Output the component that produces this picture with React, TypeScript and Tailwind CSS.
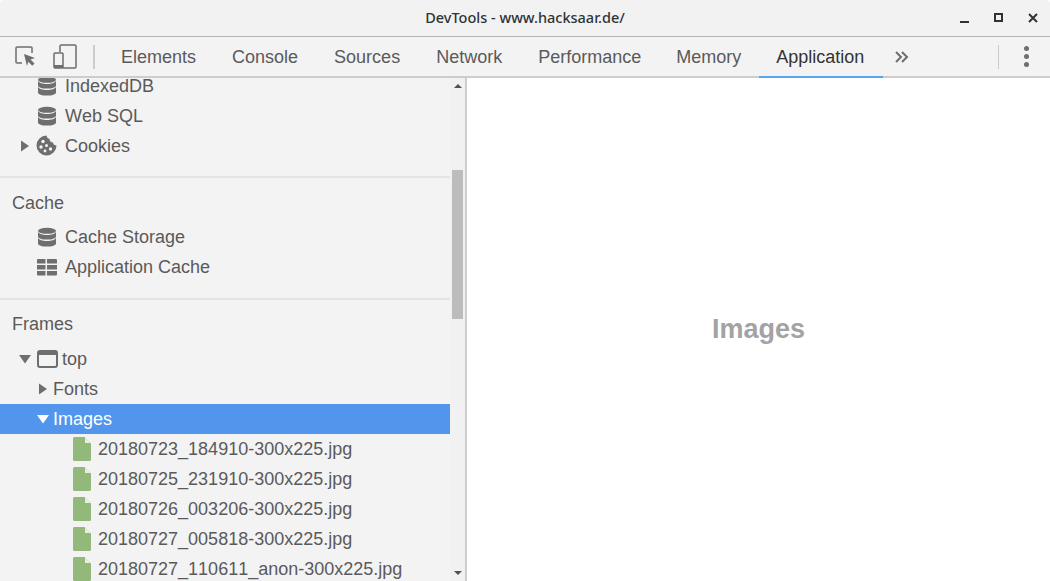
import React from "react";

const Db: React.FC = () => (
  <svg width="20" height="20" viewBox="0 0 20 20" className="shrink-0">
    <ellipse cx="10" cy="3.800" rx="9" ry="3" fill="#6e6e6e" />
    <path d="M1 4.700c1 2.100 4.500 3.200 9 3.200s8-1.100 9-3.200v4.800c0 2-4 3.100-9 3.100s-9-1.100-9-3.100z" fill="#6e6e6e" />
    <path d="M1 10.700c1 2.100 4.500 3.200 9 3.200s8-1.100 9-3.200v5.700c0 2-4 3.100-9 3.100s-9-1.100-9-3.100z" fill="#6e6e6e" />
  </svg>
);

const Cookie: React.FC = () => (
  <svg width="21" height="21" viewBox="0 0 21 21" className="shrink-0">
    <path d="M10.500.5a4 4 0 0 0 3 3.500 4 4 0 0 0 3.500 3.500 3.500 3.500 0 0 0 3.500 3A10 10 0 1 1 10.500.5z" fill="#6e6e6e" />
    <circle cx="7" cy="6.500" r="1.700" fill="#f3f3f3" />
    <circle cx="5" cy="12" r="1.700" fill="#f3f3f3" />
    <circle cx="10.500" cy="10.500" r="1.500" fill="#f3f3f3" />
    <circle cx="14.500" cy="14" r="1.700" fill="#f3f3f3" />
    <circle cx="9" cy="16" r="1.400" fill="#f3f3f3" />
  </svg>
);

const Grid: React.FC = () => (
  <svg width="20" height="17" viewBox="0 0 20 17" className="shrink-0">
    <path d="M0 1a1 1 0 0 1 1-1h7.500v4.500H0zM10 0h9a1 1 0 0 1 1 1v3.500H10zM0 6h8.500v4.500H0zM10 6h10v4.500H10zM0 12h8.500v4.500H1a1 1 0 0 1-1-1zM10 12h10v3.500a1 1 0 0 1-1 1h-9z" fill="#6e6e6e" />
  </svg>
);

const FileIcon: React.FC = () => (
  <svg width="18" height="24" viewBox="0 0 18 24" className="shrink-0">
    <path d="M1.500 0H11.500l6.500 6.500v16a1.500 1.500 0 0 1-1.500 1.500h-15A1.500 1.500 0 0 1 0 22.500v-21A1.500 1.500 0 0 1 1.500 0z" fill="#93b97a" />
    <path d="M12 .5l5.500 5.500h-5.500z" fill="#e8f0e2" />
  </svg>
);

const Arrow: React.FC<{ open?: boolean; white?: boolean }> = ({ open, white }) => (
  <svg width="12" height="12" viewBox="0 0 12 12" className="shrink-0">
    {open ? (
      <path d="M0 2h12L6 10.500z" fill={white ? "#ffffff" : "#6e6e6e"} />
    ) : (
      <path d="M2 .500l8 5.500-8 5.500z" fill="#6e6e6e" />
    )}
  </svg>
);

const Row: React.FC<{
  label: string;
  icon?: React.ReactNode;
  pad: string;
  gap?: string;
  selected?: boolean;
}> = ({ label, icon, pad, gap = "gap-2", selected }) => (
  <div
    className={
      selected
        ? `flex h-[30px] items-center bg-[#5196ec] text-white ${pad} ${gap}`
        : `flex h-[30px] items-center ${pad} ${gap}`
    }
  >
    {icon}
    <span className="whitespace-nowrap">{label}</span>
  </div>
);

const files = [
  "20180723_184910-300x225.jpg",
  "20180725_231910-300x225.jpg",
  "20180726_003206-300x225.jpg",
  "20180727_005818-300x225.jpg",
  "20180727_110611_anon-300x225.jpg",
];

const tabs = ["Elements", "Console", "Sources", "Network", "Performance", "Memory"];

const App: React.FC = () => {
  return (
    <div className="flex h-[581px] w-[1050px] flex-col overflow-hidden bg-white font-['Liberation_Sans',sans-serif] text-[18px] text-[#5a5a5a] [font-kerning:none]">
      {/* title bar */}
      <div className="relative flex h-[37px] shrink-0 items-center justify-center rounded-t-[4px] border-b border-[#b4b4ae] bg-[#f2f2f2]">
        <span className="font-['Noto_Sans',sans-serif] text-[14.500px] font-medium text-[#2e3436] [font-kerning:normal]">
          DevTools - www.hacksaar.de/
        </span>
        <div className="absolute right-[12px] top-[12px] flex items-center gap-[25px]">
          <div className="mt-[9px] h-[2px] w-[9px] bg-[#2e3436]" />
          <div className="h-[9px] w-[9px] border-2 border-[#2e3436]" />
          <svg width="10" height="10" viewBox="0 0 10 10">
            <path d="M1 1l8 8M9 1l-8 8" stroke="#2e3436" strokeWidth="2" />
          </svg>
        </div>
      </div>

      {/* toolbar */}
      <div className="flex h-[41px] shrink-0 items-center border-b-2 border-[#cdcdcd] bg-[#f3f3f3]">
        <div className="flex w-[94px] shrink-0 items-center pl-[15px]">
          <svg width="21" height="21" viewBox="0 0 21 21" className="shrink-0">
            <path d="M7 17H2a1 1 0 0 1-1-1V2a1 1 0 0 1 1-1h14a1 1 0 0 1 1 1v5" fill="none" stroke="#6e6e6e" strokeWidth="1.500" />
            <path d="M9 8l11 4-4.500 1.500 4 4-2.200 2.200-4-4L12 20z" fill="#6e6e6e" />
          </svg>
          <svg width="24" height="25" viewBox="0 0 24 25" className="ml-[17px] shrink-0">
            <path d="M7 8V2a1 1 0 0 1 1-1h14a1 1 0 0 1 1 1v21a1 1 0 0 1-1 1H10" fill="none" stroke="#6e6e6e" strokeWidth="1.500" />
            <rect x="1" y="9" width="9" height="15" rx="1" fill="none" stroke="#6e6e6e" strokeWidth="1.500" />
            <rect x="1" y="21" width="9" height="3" fill="#6e6e6e" />
          </svg>
          <div className="ml-[16px] h-[24px] w-[2px] shrink-0 bg-[#cccccc]" />
        </div>
        <div className="flex h-full items-center pl-[9px]">
          {tabs.map((tab) => (
            <div
              key={tab}
              className={
                tab === "Memory"
                  ? "-ml-px flex h-full items-center px-[18px] pt-[2px]"
                  : "flex h-full items-center px-[18px] pt-[2px]"
              }
            >
              {tab}
            </div>
          ))}
          <div className="relative -mb-[2px] flex h-[41px] w-[124px] items-center justify-center pr-[2px] text-[#333333]">
            Application
            <div className="absolute bottom-0 left-0 h-[2px] w-full bg-[#58a6f2]" />
          </div>
          <svg width="14" height="12" viewBox="0 0 14 12" className="ml-[12px]">
            <path d="M1 1l5 5-5 5M7 1l5 5-5 5" fill="none" stroke="#6e6e6e" strokeWidth="2" />
          </svg>
        </div>
        <div className="ml-auto flex items-center">
          <div className="h-[24px] w-px bg-[#cccccc]" />
          <div className="ml-[25px] mr-[21px] flex flex-col gap-[3px]">
            <div className="h-[5px] w-[5px] rounded-full bg-[#6e6e6e]" />
            <div className="h-[5px] w-[5px] rounded-full bg-[#6e6e6e]" />
            <div className="h-[5px] w-[5px] rounded-full bg-[#6e6e6e]" />
          </div>
        </div>
      </div>

      <div className="flex min-h-0 flex-1">
        {/* sidebar */}
        <div className="flex w-[467px] shrink-0 border-r-2 border-[#cdcdcd] bg-[#f3f3f3]">
          <div className="w-[450px] shrink-0 overflow-hidden">
            <div className="-mt-[7px]">
              <Row label="IndexedDB" pad="pl-[37px]" icon={<Db />} />
              <Row label="Web SQL" pad="pl-[37px]" icon={<Db />} />
              <Row
                label="Cookies"
                pad="pl-[19px]"
                gap="gap-[9px]"
                icon={
                  <>
                    <Arrow />
                    <span className="-ml-[4px] -mt-[2px] w-[20px]">
                      <Cookie />
                    </span>
                  </>
                }
              />
              <div className="mt-[15px] h-[2px] bg-[#e4e4e4]" />
              <div className="flex h-[44px] items-center pt-[6px] pl-[12px]">Cache</div>
              <Row label="Cache Storage" pad="pl-[37px]" icon={<Db />} />
              <Row label="Application Cache" pad="pl-[37px]" icon={<Grid />} />
              <div className="mt-[16px] h-[2px] bg-[#e4e4e4]" />
              <div className="flex h-[44px] items-center pt-[4px] pl-[12px]">Frames</div>
              <Row
                label="top"
                pad="pl-[19px]"
                gap="gap-[4px]"
                icon={
                  <>
                    <Arrow open />
                    <svg width="21" height="18" viewBox="0 0 21 18" className="ml-[2px] shrink-0">
                      <rect x="1" y="1" width="19" height="16" rx="2" fill="none" stroke="#6e6e6e" strokeWidth="2" />
                      <rect x="1" y="1" width="19" height="4" fill="#6e6e6e" />
                    </svg>
                  </>
                }
              />
              <Row label="Fonts" pad="pl-[37px]" gap="gap-[4px]" icon={<Arrow />} />
              <Row label="Images" pad="pl-[37px]" gap="gap-[4px]" selected icon={<Arrow open white />} />
              {files.map((file) => (
                <Row key={file} label={file} pad="pl-[73px]" gap="gap-[7px]" icon={<FileIcon />} />
              ))}
            </div>
          </div>
          {/* scrollbar */}
          <div className="relative w-[15px] shrink-0 bg-[#f1f1f1]">
            <div className="absolute left-[2px] top-[92px] h-[149px] w-[11px] bg-[#bcbcbc]" />
            <div className="absolute left-[4px] top-[6px] h-0 w-0 border-x-[4px] border-b-[4px] border-x-transparent border-b-[#505050]" />
            <div className="absolute bottom-[6px] left-[4px] h-0 w-0 border-x-[4px] border-t-[4px] border-x-transparent border-t-[#505050]" />
          </div>
        </div>

        {/* main pane */}
        <div className="flex flex-1 items-center justify-center bg-white">
          <span className="text-[27px] font-bold text-[#a3a3a3]">Images</span>
        </div>
      </div>
    </div>
  );
};

export default App;
